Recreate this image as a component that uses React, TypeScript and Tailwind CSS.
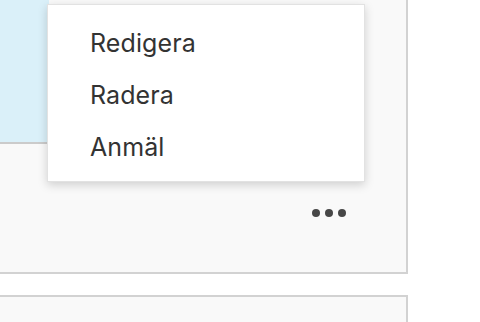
import React from "react";

export default function App() {
  return (
    <div className="relative w-[480px] h-[322px] overflow-hidden bg-white" style={{ fontFamily: "Inter, 'Noto Sans', sans-serif" }}>
      <div className="-ml-[2px] w-[410px] flex flex-col">
        <div className="border-x-2 border-b-2 border-[#d2d2d2] bg-[#f9f9f9]">
          <div className="w-[49px] h-[144px] bg-[#daf0f9] border-b-2 border-[#cbcbcb]" />
          <div className="h-[128px] flex justify-end items-start pt-[65px] pr-[60px]">
            <div className="flex gap-[5px]">
              <span className="w-2 h-2 rounded-full bg-[#474747]" />
              <span className="w-2 h-2 rounded-full bg-[#474747]" />
              <span className="w-2 h-2 rounded-full bg-[#474747]" />
            </div>
          </div>
        </div>
        <div className="mt-[21px] h-[60px] border-x-2 border-t-2 border-[#d2d2d2] bg-[#f9f9f9]" />
      </div>

      <div className="absolute left-[47px] top-[4px] w-[318px] h-[178px] bg-white border border-[#e2e2e2] shadow-[0_3px_9px_rgba(0,0,0,0.17)] pt-[13px] pb-[7px]">
        {["Redigera", "Radera", "Anmäl"].map((t) => (
          <div key={t} className="h-[52px] flex items-center pl-[42px] text-[25px] tracking-[0.1px] text-[#333333]">
            {t}
          </div>
        ))}
      </div>
    </div>
  );
}
